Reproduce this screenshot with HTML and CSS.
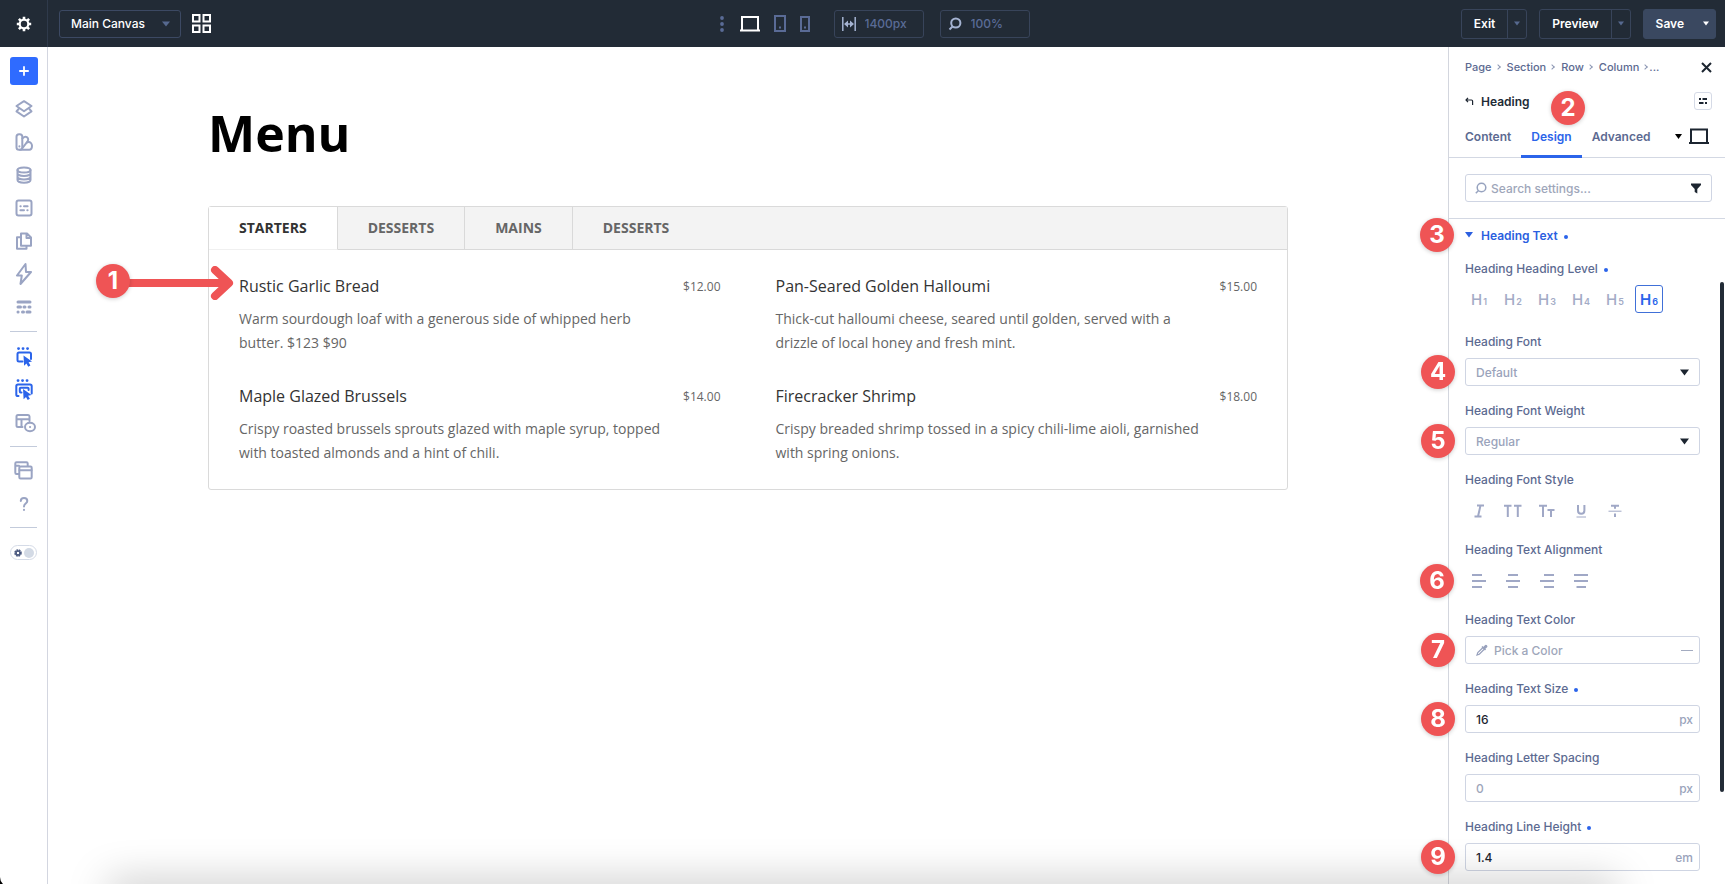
FILE: index.html
```
<!DOCTYPE html>
<html lang="en">
<head>
    <meta charset="UTF-8">
    <meta name="viewport" content="width=device-width, initial-scale=1.0">
    <title>Menu - Visual Builder</title>
    <link rel="stylesheet" href="styles.css">
</head>
<body>
    <!-- top bar -->
    <header class="topbar">
        <button class="tb_settings" aria-label="Settings">
            <svg width="16" height="16" viewBox="0 0 16 16"><g stroke="#fff" stroke-width="2.600"><path d="M8 .8v14.400M.8 8h14.400M2.900 2.900l10.200 10.200M13.100 2.900L2.900 13.100"/></g><circle cx="8" cy="8" r="5.400" fill="#fff"/><circle cx="8" cy="8" r="3.200" fill="#222b36"/></svg>
        </button>
        <div class="tb_left">
            <div class="tb_canvas">
                <select name="canvas" aria-label="Canvas">
                    <option>Main Canvas</option>
                </select>
                <svg class="arrow" width="8" height="6" viewBox="0 0 8 6"><path d="M0 .5h8L4 5.500z" fill="#56698f"/></svg>
            </div>
            <button aria-label="Canvas grid">
                <svg width="19" height="19" viewBox="0 0 19 19" fill="none" stroke="#fff" stroke-width="2"><path d="M1 1h6.500v6.500H1zM11.500 1H18v6.500h-6.500zM1 11.500h6.500V18H1zM11.500 11.500H18V18h-6.500z"/></svg>
            </button>
        </div>
        <div class="tb_center">
            <button aria-label="More">
                <svg width="4" height="16" viewBox="0 0 4 16" fill="#5a6b96"><circle cx="2" cy="2" r="1.900"/><circle cx="2" cy="8" r="1.900"/><circle cx="2" cy="14" r="1.900"/></svg>
            </button>
            <div class="tb_devices">
                <button aria-label="Desktop">
                    <svg width="20" height="17" viewBox="0 0 20 17" fill="none" stroke="#fff" stroke-width="2"><path d="M2 15V2h16v13M0 15.500h20"/></svg>
                </button>
                <button aria-label="Tablet">
                    <svg width="12" height="17" viewBox="0 0 12 17" fill="none" stroke="#5a6b96" stroke-width="2"><path d="M1 1h10v15H1z"/><path d="M5 12.500h2"/></svg>
                </button>
                <button aria-label="Phone">
                    <svg width="10" height="16" viewBox="0 0 10 16" fill="none" stroke="#5a6b96" stroke-width="2"><path d="M1 1h8v14H1z"/><path d="M4 11.500h2"/></svg>
                </button>
            </div>
            <label class="tb_box">
                <svg width="14" height="14" viewBox="0 0 14 14" fill="none" stroke="#a5b3d2" stroke-width="1.500"><path d="M.8 0v14M13.200 0v14M3 7h8"/><path d="M6 3.500v7L2 7zM8 3.500v7L12 7z" fill="#a5b3d2" stroke="none"/></svg>
                <input type="text" name="width" value="1400px" aria-label="Canvas width">
            </label>
            <label class="tb_box">
                <svg width="14" height="14" viewBox="0 0 14 14" fill="none" stroke="#a5b3d2" stroke-width="2"><circle cx="7.800" cy="6" r="4.600"/><path d="M4.500 9.500L1.500 12.500"/></svg>
                <input type="text" name="zoom" value="100%" aria-label="Zoom">
            </label>
        </div>
        <div class="tb_right">
            <div class="tb_split">
                <button>Exit</button>
                <button class="more" aria-label="Exit options"><svg width="6" height="5" viewBox="0 0 6 5"><path d="M0 .5h6L3 4.500z"/></svg></button>
            </div>
            <div class="tb_split">
                <button>Preview</button>
                <button class="more" aria-label="Preview options"><svg width="6" height="5" viewBox="0 0 6 5"><path d="M0 .5h6L3 4.500z"/></svg></button>
            </div>
            <div class="tb_split save">
                <button>Save</button>
                <button class="more" aria-label="Save options"><svg width="6" height="5" viewBox="0 0 6 5"><path d="M0 .5h6L3 4.500z"/></svg></button>
            </div>
        </div>
    </header>

    <div class="builder">
        <!-- left toolbar -->
        <nav class="sidebar">
            <button class="sb_add" aria-label="Add">
                <svg width="10" height="10" viewBox="0 0 10 10" stroke="#fff" stroke-width="1.800" stroke-linecap="round"><path d="M5 .9v8.200M.9 5h8.200"/></svg>
            </button>
            <button class="sb_item" aria-label="Layers">
                <svg width="18" height="18" viewBox="0 0 18 18"><path d="M9 1.200L16.500 6 9 11.200 1.500 6z"/><path d="M3.600 9L1.500 11.400 9 16.500l7.500-5.100L14.400 9"/></svg>
            </button>
            <button class="sb_item" aria-label="Presets">
                <svg width="18" height="18" viewBox="0 0 18 18"><rect x="1.500" y="1.200" width="5.800" height="15.500" rx="2.500"/><path d="M7.300 5.500l2-1.500c1.500-1 4 .5 3.900 2.500-.1 1.200-.5 1.800-1.200 2.700L7.500 15"/><path d="M11.800 9.600l1.600-.6c1.600-.4 3.600 1.500 3.600 3.700 0 2.400-1.200 4-2.800 4H5"/><path d="M4.400 13.300v.2"/></svg>
            </button>
            <button class="sb_item" aria-label="Data">
                <svg width="18" height="18" viewBox="0 0 18 18"><ellipse cx="9" cy="4" rx="6.500" ry="2.600"/><path d="M2.500 4v10c0 1.500 2.900 2.700 6.500 2.700s6.500-1.200 6.500-2.700V4M2.500 7.300C2.500 8.800 5.400 10 9 10s6.500-1.200 6.500-2.700M2.500 10.700c0 1.500 2.900 2.700 6.500 2.700s6.500-1.200 6.500-2.700"/></svg>
            </button>
            <button class="sb_item" aria-label="Variables">
                <svg width="18" height="18" viewBox="0 0 18 18"><rect x="1.500" y="1.500" width="15" height="15" rx="2"/><path d="M5.400 7.300h.3M9 7.300h3.600M5.400 11.200H9M12.300 11.200h.3"/></svg>
            </button>
            <button class="sb_item" aria-label="Pages">
                <svg width="18" height="18" viewBox="0 0 18 18"><path d="M6 1.500h6l4 4v8.200H6zM11.500 2v4h4"/><path d="M5.500 5.200H2v11.600h9.500v-2.800"/></svg>
            </button>
            <button class="sb_item" aria-label="Interactions">
                <svg width="18" height="22" viewBox="0 0 18 22"><path d="M10.500 1L2 12.500h4.800L5.500 21 16 9h-5z"/></svg>
            </button>
            <button class="sb_item bold" aria-label="Wireframe">
                <svg width="18" height="18" viewBox="0 0 18 18"><path d="M3 4h12M3 9h2.500M9 9h1M14 9h1M3 14h.1M7.500 14h1M12 14h3"/></svg>
            </button>
            <hr>
            <button class="sb_item active" aria-label="Click mode">
                <svg width="18" height="20" viewBox="0 0 18 20"><path d="M3.500 1.600h.1M8 1.600h.1M12.500 1.600h.1" stroke-width="2.800"/><path d="M7.500 14.500H4c-1 0-1.500-.5-1.500-1.500V7c0-1 .5-1.500 1.500-1.500h10.500c1 0 1.500.5 1.500 1.500v5"/><path d="M8.500 8.500l8.500 6-3.400.8 1.800 3.300-2.200 1.200-1.700-3.300-2.400 2.300z" fill="#2b64ea" stroke="none"/></svg>
            </button>
            <button class="sb_item active" aria-label="Hover mode">
                <svg width="18" height="21" viewBox="0 0 18 21"><path d="M3 1.600h.1M7.500 1.600h.1M12 1.600h.1" stroke-width="2.800"/><path d="M3.500 17H3c-1 0-1.700-.6-1.700-1.600V7c0-1 .7-1.600 1.700-1.600h12c1 0 1.700.6 1.700 1.600v7.500M6.500 13.500h-.8c-.6 0-.9-.3-.9-.9v-3c0-.6.300-.9.900-.9h7c.6 0 .9.300.9.900v1.500"/><path d="M8 10l8.500 6-3.400.8 1.800 3-2.200 1.200-1.700-3-2.400 2.300z" fill="#2b64ea" stroke="none"/></svg>
            </button>
            <button class="sb_item wide" aria-label="Layout view">
                <svg width="21" height="20" viewBox="0 0 21 20"><path d="M7.500 14H3c-1 0-1.500-.6-1.500-1.500v-9C1.500 2.500 2 2 3 2h10.100c1 0 1.400.6 1.400 1.500V8M2 6.300h12.500M6.500 6.300V14"/><ellipse cx="15" cy="14" rx="5" ry="4.200"/><path d="M15 14h.1"/></svg>
            </button>
            <hr>
            <button class="sb_item" aria-label="Windows">
                <svg width="19" height="19" viewBox="0 0 19 19"><path d="M5 13H2.500c-.8 0-1.200-.4-1.200-1.200V2.500c0-.8.4-1.200 1.200-1.200h10c.8 0 1.200.4 1.200 1.200v2.200M1.500 4.800H5"/><rect x="5.300" y="5.500" width="12.400" height="12" rx="1.200"/><path d="M5.500 9.200h12"/></svg>
            </button>
            <button class="sb_item" aria-label="Help">
                <svg width="18" height="18" viewBox="0 0 18 18"><path d="M5.800 6C5.800 4 7.200 3 9 3s3.300 1.100 3.300 3c0 2.600-3.300 2.600-3.300 5.400M9 14.800v.1"/></svg>
            </button>
            <hr>
            <button class="sb_toggle" aria-label="Color scheme">
                <svg width="8" height="8" viewBox="0 0 8 8"><circle cx="4" cy="4" r="2.600" fill="none" stroke="#4c5a80" stroke-width="2.400" stroke-dasharray="1.500 .6"/><circle cx="4" cy="4" r="2" fill="none" stroke="#4c5a80" stroke-width="1.500"/></svg>
                <span></span>
            </button>
        </nav>

        <!-- page canvas -->
        <main class="canvas">
            <div class="row">
                <h1>Menu</h1>
                <div class="tabs">
                    <ul class="tabs_nav">
                        <li class="on"><a href="#none">STARTERS</a></li>
                        <li><a href="#none">DESSERTS</a></li>
                        <li><a href="#none">MAINS</a></li>
                        <li><a href="#none">DESSERTS</a></li>
                    </ul>
                    <div class="tabs_content">
                        <div class="dish">
                            <div class="step step_arrow">
                                <b>1</b>
                                <svg width="106" height="34" viewBox="0 0 106 34" fill="none" stroke="#ef5455" stroke-width="8" stroke-linecap="round" stroke-linejoin="round"><path d="M0 17h98M87 4l14 13-14 13"/></svg>
                            </div>
                            <div class="dish_head">
                                <h6>Rustic Garlic Bread</h6>
                                <span>$12.00</span>
                            </div>
                            <p>Warm sourdough loaf with a generous side of whipped herb butter. $123 $90</p>
                        </div>
                        <div class="dish">
                            <div class="dish_head">
                                <h6>Pan-Seared Golden Halloumi</h6>
                                <span>$15.00</span>
                            </div>
                            <p>Thick-cut halloumi cheese, seared until golden, served with a drizzle of local honey and fresh mint.</p>
                        </div>
                        <div class="dish">
                            <div class="dish_head">
                                <h6>Maple Glazed Brussels</h6>
                                <span>$14.00</span>
                            </div>
                            <p>Crispy roasted brussels sprouts glazed with maple syrup, topped with toasted almonds and a hint of chili.</p>
                        </div>
                        <div class="dish">
                            <div class="dish_head">
                                <h6>Firecracker Shrimp</h6>
                                <span>$18.00</span>
                            </div>
                            <p>Crispy breaded shrimp tossed in a spicy chili-lime aioli, garnished with spring onions.</p>
                        </div>
                    </div>
                </div>
            </div>
        </main>

        <!-- settings panel -->
        <aside class="panel">
            <div class="p_crumbs">
                <a href="#none">Page</a><i></i><a href="#none">Section</a><i></i><a href="#none">Row</a><i></i><a href="#none">Column</a><i></i><span>...</span>
                <button class="p_close" aria-label="Close">
                    <svg width="11" height="11" viewBox="0 0 11 11" stroke="#1c2530" stroke-width="2"><path d="M1 1l9 9M10 1l-9 9"/></svg>
                </button>
            </div>
            <div class="p_title">
                <button aria-label="Back">
                    <svg width="9" height="9" viewBox="0 0 9 9" fill="none" stroke="#1c2530" stroke-width="1.200"><path d="M3 .8L1 3l2 2.200M1 3h5.500c.7 0 1.100.4 1.100 1.100V8"/></svg>
                </button>
                <h2>Heading</h2>
                <button class="p_preset" aria-label="Presets">
                    <svg width="10" height="8" viewBox="0 0 10 8" stroke="#1c2530" stroke-width="1.800"><path d="M1 2h2M4.500 2H9M1 6h4.500M7 6h2"/></svg>
                </button>
                <b class="step step_title">2</b>
            </div>
            <div class="p_tabs">
                <a href="#none">Content</a>
                <a href="#none" class="on">Design</a>
                <a href="#none">Advanced</a>
                <button class="p_device" aria-label="Device">
                    <svg width="7" height="5" viewBox="0 0 7 5"><path d="M0 0h7L3.500 5z" fill="#000"/></svg>
                    <svg width="20" height="17" viewBox="0 0 20 17" fill="none" stroke="#1c2530" stroke-width="2"><path d="M2 15V1.500h16V15M0 15h20"/></svg>
                </button>
            </div>
            <div class="p_search">
                <label class="p_input">
                    <svg width="12" height="12" viewBox="0 0 12 12" fill="none" stroke="#97a3bf" stroke-width="1.500"><circle cx="6.500" cy="5.500" r="4.300"/><path d="M3.500 8.500L.8 11.200"/></svg>
                    <input type="text" name="search" placeholder="Search settings..." aria-label="Search settings">
                    <svg width="10" height="11" viewBox="0 0 10 11"><path d="M0 .5h10v1.600L6.300 6v4.500L3.700 9V6L0 2.100z" fill="#1c2530"/></svg>
                </label>
            </div>
            <div class="p_group">
                <button class="p_toggle">
                    <svg width="8" height="6" viewBox="0 0 8 6"><path d="M0 0h8L4 5.500z" fill="#2b5fe0"/></svg>
                    <span class="changed">Heading Text</span>
                    <b class="step">3</b>
                </button>
                <div class="field field_level">
                    <span class="f_name changed">Heading Heading Level</span>
                    <div class="f_row">
                        <button>H<small>1</small></button>
                        <button>H<small>2</small></button>
                        <button>H<small>3</small></button>
                        <button>H<small>4</small></button>
                        <button>H<small>5</small></button>
                        <button class="on">H<small>6</small></button>
                    </div>
                </div>
                <div class="field">
                    <label class="f_name" for="f_font">Heading Font</label>
                    <div class="f_row f_box">
                        <b class="step">4</b>
                        <select name="f_font" id="f_font"><option>Default</option></select>
                        <svg class="arrow" width="9" height="7" viewBox="0 0 9 7"><path d="M0 .5h9L4.500 6.500z" fill="#1c2530"/></svg>
                    </div>
                </div>
                <div class="field">
                    <label class="f_name" for="f_weight">Heading Font Weight</label>
                    <div class="f_row f_box">
                        <b class="step">5</b>
                        <select name="f_weight" id="f_weight"><option>Regular</option></select>
                        <svg class="arrow" width="9" height="7" viewBox="0 0 9 7"><path d="M0 .5h9L4.500 6.500z" fill="#1c2530"/></svg>
                    </div>
                </div>
                <div class="field">
                    <span class="f_name">Heading Font Style</span>
                    <div class="f_row f_icons">
                        <button aria-label="Italic"><svg width="20" height="14" viewBox="0 0 20 14"><path d="M8 1.500h7M5.500 12.500h7M11.500 1.500l-2.500 11"/></svg></button>
                        <button aria-label="Uppercase"><svg width="20" height="14" viewBox="0 0 20 14"><path d="M1 1.800h7.500M4.800 1.800V13M11 1.800h7.500M14.800 1.800V13"/></svg></button>
                        <button aria-label="Small caps"><svg width="20" height="14" viewBox="0 0 20 14"><path d="M2 1.800h8M6 1.800V13M10.500 6h7M14 6v7"/></svg></button>
                        <button aria-label="Underline"><svg width="20" height="14" viewBox="0 0 20 14"><path d="M7 1v5.500c0 2 1.200 3.300 3.200 3.300s3.200-1.300 3.200-3.300V1"/><path d="M5.500 13h9.500" stroke-width="1"/></svg></button>
                        <button aria-label="Strikethrough"><svg width="20" height="14" viewBox="0 0 20 14"><path d="M6 1.800h8M10 1.800v3M10 9.500V13"/><path d="M3.500 7.200h13" stroke-width="1"/></svg></button>
                    </div>
                </div>
                <div class="field">
                    <span class="f_name">Heading Text Alignment</span>
                    <div class="f_row f_icons">
                        <b class="step">6</b>
                        <button aria-label="Left"><svg width="20" height="14" viewBox="0 0 20 14"><path d="M3 1h10M3 7h14M3 13h10"/></svg></button>
                        <button aria-label="Center"><svg width="20" height="14" viewBox="0 0 20 14"><path d="M5 1h10M3 7h14M5 13h10"/></svg></button>
                        <button aria-label="Right"><svg width="20" height="14" viewBox="0 0 20 14"><path d="M7 1h10M3 7h14M7 13h10"/></svg></button>
                        <button aria-label="Justify"><svg width="20" height="14" viewBox="0 0 20 14"><path d="M3 1h14M3 7h14M5.500 13h9.500"/></svg></button>
                    </div>
                </div>
                <div class="field">
                    <label class="f_name" for="f_color">Heading Text Color</label>
                    <div class="f_row f_box">
                        <b class="step">7</b>
                        <svg width="12" height="12" viewBox="0 0 12 12" fill="none" stroke="#97a0bc" stroke-width="1.200"><path d="M7 3.500L1.800 8.700l-.8 2.300 2.300-.8L8.500 5"/><path d="M6 2.500L9.500 6M7.700 3.800l1.800-2c.5-.5 1.500.4 1 1l-2 1.800z" stroke-width="1.600"/></svg>
                        <input type="text" name="f_color" id="f_color" placeholder="Pick a Color">
                        <span class="dash"></span>
                    </div>
                </div>
                <div class="field">
                    <label class="f_name changed" for="f_size">Heading Text Size</label>
                    <div class="f_row f_box">
                        <b class="step">8</b>
                        <input type="text" name="f_size" id="f_size" value="16">
                        <span class="unit">px</span>
                    </div>
                </div>
                <div class="field">
                    <label class="f_name" for="f_spacing">Heading Letter Spacing</label>
                    <div class="f_row f_box">
                        <input type="text" name="f_spacing" id="f_spacing" placeholder="0">
                        <span class="unit">px</span>
                    </div>
                </div>
                <div class="field">
                    <label class="f_name changed" for="f_line">Heading Line Height</label>
                    <div class="f_row f_box">
                        <b class="step">9</b>
                        <input type="text" name="f_line" id="f_line" value="1.4">
                        <span class="unit">em</span>
                    </div>
                </div>
            </div>
            <div class="p_scroll"></div>
        </aside>
    </div>
    <div class="bottom_shade"></div>
</body>
</html>
```

FILE: styles.css
```
* {box-sizing: border-box;}
html {background-color: #000;}
body {
    display: flex;
    flex-direction: column;
    min-height: 100vh;
    margin: 0px;
    border-radius: 0px 0px 3px 10px;
    font-family: Inter, "Liberation Sans", sans-serif;
    font-size: 12px;
    font-weight: 500;
    color: #5c6a91;
    background-color: #fff;
    overflow: hidden;
}
a{text-decoration: none; color: inherit;}
button, input, select {
    margin: 0px;
    padding: 0px;
    border: 0px;
    background: none;
    font: inherit;
    color: inherit;
    appearance: none;
    outline: none;
}
button {
    display: flex;
    align-items: center;
    justify-content: center;
}
svg {display: block; flex: none;}
/* top bar ======================================== */
.topbar {
    display: flex;
    align-items: center;
    height: 47px;
    background-color: #222b36;
    color: #fff;
}
.tb_settings {
    width: 48px;
    height: 100%;
    border-right: 1px solid #2f3a4b;
}
.tb_left, .tb_right {
    display: flex;
    align-items: center;
    flex: 1;
    gap: 11px;
    padding: 0px 11px;
}
.tb_right {
    justify-content: flex-end;
    gap: 12px;
    padding: 0px 9px;
}
.tb_canvas {
    position: relative;
    width: 122px;
    height: 28px;
}
.tb_canvas select {
    width: 100%;
    height: 100%;
    padding-left: 11px;
    border: 1px solid #3c4963;
    border-radius: 3px;
}
.arrow {
    position: absolute;
    top: 11px;
    right: 11px;
    pointer-events: none;
}
.tb_center {
    display: flex;
    align-items: center;
    gap: 16px;
    margin-right: 28px;
}
.tb_devices {
    display: flex;
    align-items: center;
    gap: 14px;
    margin-right: 8px;
}
.tb_box {
    display: flex;
    align-items: center;
    gap: 9px;
    width: 90px;
    height: 28px;
    padding: 0px 7px;
    border: 1px solid #38445a;
    border-radius: 3px;
    color: #5a6b96;
}
.tb_box input {
    width: 100%;
    min-width: 0px;
}
.tb_split {
    display: flex;
    height: 30px;
    border: 1px solid #38445a;
    border-radius: 3px;
    font-weight: 600;
}
.tb_split button {
    padding: 0px 12px;
}
.tb_split .more {
    width: 19px;
    padding: 0px;
    border-left: 1px solid #38445a;
}
.more svg {fill: #56698f;}
.tb_split.save {
    background-color: #3a4860;
    border-color: #3a4860;
}
.save .more {border-color: #3a4860;}
.save .more svg {fill: #fff;}
/* layout ======================================== */
.builder {
    display: flex;
    flex: 1;
}
/* left toolbar ======================================== */
.sidebar {
    display: flex;
    flex-direction: column;
    align-items: center;
    width: 48px;
    padding-top: 10px;
    border-right: 1px solid #d3d6e0;
}
.sb_add {
    width: 28px;
    height: 28px;
    margin-bottom: 7px;
    border-radius: 3px;
    background-color: #2f6bff;
}
.sb_item {
    width: 28px;
    height: 33px;
}
.sb_item svg {
    fill: none;
    stroke: #9aa4c3;
    stroke-width: 2px;
    stroke-linecap: round;
    stroke-linejoin: round;
}
.sb_item.active svg {stroke: #2b64ea;}
.sb_item.bold svg {stroke-width: 3px;}
.sb_item.wide {padding-left: 4px;}
.sidebar hr {
    width: 27px;
    margin: 7px 0px;
    border: 0px;
    border-top: 1px solid #c3cbdb;
}
.sidebar hr:first-of-type {margin: 8px 0px;}
.sb_toggle {
    justify-content: space-between;
    width: 27px;
    height: 15px;
    margin-top: 10px;
    padding: 0px 2px 0px 3px;
    border: 1px solid #d5dbe7;
    border-radius: 8px;
}
.sb_toggle span {
    width: 10px;
    height: 10px;
    border-radius: 50%;
    background-color: #d3dae5;
}
/* canvas ======================================== */
.canvas {
    flex: 1;
    font-family: "Open Sans", sans-serif;
    font-weight: 400;
    color: #666;
}
.row {
    max-width: 1080px;
    margin: 0px auto;
    padding-top: 56px;
}
.row h1 {
    margin: 0px 0px 43px;
    font-size: 50px;
    line-height: 60px;
    font-weight: 700;
    color: #000;
}
.tabs {
    border: 1px solid #dadada;
    border-radius: 3px;
}
.tabs_nav {
    display: flex;
    margin: 0px;
    padding: 0px;
    list-style: none;
    background-color: #f3f3f3;
    border-bottom: 1px solid #d9d9d9;
}
.tabs_nav li {
    margin-bottom: -1px;
    border-right: 1px solid #d9d9d9;
    border-bottom: 1px solid #d9d9d9;
}
.tabs_nav li:last-child {border-right: 0px;}
.tabs_nav a {
    display: block;
    padding: 0px 30px;
    font-size: 14px;
    line-height: 42px;
    font-weight: 700;
}
.tabs_nav .on {
    background-color: #fff;
    border-bottom-color: #f0f0f0;
    color: #333;
}
.tabs_content {
    display: grid;
    grid-template-columns: 1fr 1fr;
    gap: 29px 55px;
    padding: 24px 30px;
}
.dish {position: relative;}
.dish_head {
    display: flex;
    align-items: center;
    justify-content: space-between;
    height: 24px;
    margin-bottom: 9px;
    font-size: 12px;
}
.dish_head h6 {
    margin: 0px;
    font-size: 16px;
    font-weight: 400;
    color: #333;
}
.dish p {
    margin: 0px;
    padding-right: 50px;
    font-size: 14px;
    line-height: 24px;
}
/* settings panel ======================================== */
.panel {
    position: relative;
    width: 277px;
    padding-top: 10px;
    border-left: 1px solid #d3d6de;
}
.p_crumbs, .p_title {
    display: flex;
    align-items: center;
    height: 20px;
    padding: 0px 13px 0px 16px;
}
.p_crumbs {font-size: 11px;}
.p_crumbs i {
    width: 4px;
    height: 4px;
    margin: 0px 7px 0px 4px;
    border-top: 1px solid #8b96b3;
    border-right: 1px solid #8b96b3;
    transform: rotate(45deg);
}
.p_crumbs i:last-of-type {margin-right: 2px;}
.p_close {margin-left: auto;}
.p_title {
    position: relative;
    gap: 7px;
    margin: 14px 0px 4px;
}
.p_title h2 {
    margin: 0px;
    font-size: 12px;
    font-weight: 600;
    color: #222b36;
}
.p_preset {
    width: 18px;
    height: 18px;
    margin-left: auto;
    border: 1px solid #d5dae6;
    border-radius: 3px;
}
.p_tabs {
    display: flex;
    height: 43px;
    padding: 0px 16px 0px 6px;
    border-bottom: 1px solid #d3d8e3;
    font-weight: 600;
}
.p_tabs a {
    display: flex;
    align-items: center;
    padding: 0px 10px;
    border-bottom: 3px solid transparent;
    border-top: 3px solid transparent;
    margin-bottom: -1px;
}
.p_tabs .on {
    color: #2b64ea;
    border-bottom-color: #2b64ea;
}
.p_device {
    gap: 7px;
    margin-left: auto;
}
.p_search {
    padding: 16px 13px 16px 16px;
    border-bottom: 1px solid #d3d8e3;
}
.p_input {
    display: flex;
    align-items: center;
    gap: 4px;
    height: 28px;
    padding: 0px 10px 0px 9px;
    border: 1px solid #cfd5e3;
    border-radius: 3px;
}
.p_input input {
    flex: 1;
    min-width: 0px;
}
::placeholder {
    color: #9ea6ba;
    opacity: 1;
}
.p_group {
    padding: 8px 25px 0px 16px;
}
.p_toggle {
    position: relative;
    gap: 8px;
    height: 16px;
    margin-bottom: 17px;
    font-weight: 600;
    color: #2b5fe0;
}
.changed::after {
    content: "";
    display: inline-block;
    width: 4px;
    height: 4px;
    margin-left: 6px;
    border-radius: 50%;
    background-color: #2b64ea;
    vertical-align: 1px;
}
.field {margin-bottom: 16px;}
.field_level {margin-bottom: 20px;}
.f_name {
    display: block;
    height: 18px;
    margin-bottom: 7px;
    line-height: 18px;
}
.f_row {
    position: relative;
    display: flex;
    gap: 6px;
    height: 28px;
}
.f_row button {
    width: 28px;
    height: 28px;
    border: 1px solid transparent;
    border-radius: 3px;
    font-size: 15px;
    color: #a3abc6;
}
.f_row button small {
    align-self: flex-end;
    margin: 0px 0px 5px 1px;
    font-size: 9px;
    font-weight: 600;
}
.f_row button.on {
    border-color: #4070d8;
    font-weight: 600;
    color: #2b64ea;
}
.f_icons {height: 29px; align-items: center;}
.f_icons svg {
    fill: none;
    stroke: #a0a8c6;
    stroke-width: 2px;
}
.f_box {
    align-items: center;
    border: 1px solid #cfd5e3;
    border-radius: 3px;
    padding: 0px 6px 0px 10px;
    color: #9aa3bb;
}
.f_box select {
    width: 100%;
    height: 100%;
}
.f_box .arrow {top: 10px; right: 10px;}
.f_box input {
    flex: 1;
    min-width: 0px;
    color: #1c2530;
}
.dash {
    width: 12px;
    height: 1px;
    background-color: #a3abc0;
}
.p_scroll {
    position: absolute;
    top: 235px;
    right: 1px;
    width: 4px;
    height: 510px;
    border-radius: 2px;
    background-color: #222b36;
}
/* numbered steps ======================================== */
.step, .step_arrow b {
    position: absolute;
    left: -45px;
    z-index: 2;
    display: flex;
    align-items: center;
    justify-content: center;
    width: 34px;
    height: 34px;
    border-radius: 50%;
    background-color: #ef5455;
    box-shadow: 0px 1px 4px rgba(0, 0, 0, 0.2);
    font-family: Inter, sans-serif;
    font-size: 24px;
    line-height: 34px;
    font-weight: 700;
    color: #fff;
}
.step_title {left: 102px; top: 0px;}
.step_arrow {
    left: -143px;
    top: -8px;
    width: 138px;
    justify-content: flex-end;
    background: none;
    box-shadow: none;
}
.step_arrow b {left: 0px; top: -2px;}
/* soft shade along the window bottom */
.bottom_shade {
    position: fixed;
    left: 110px;
    right: 110px;
    bottom: -20px;
    height: 20px;
    box-shadow: 0px 0px 40px 2px rgba(0, 0, 0, 0.26);
    pointer-events: none;
}
```
